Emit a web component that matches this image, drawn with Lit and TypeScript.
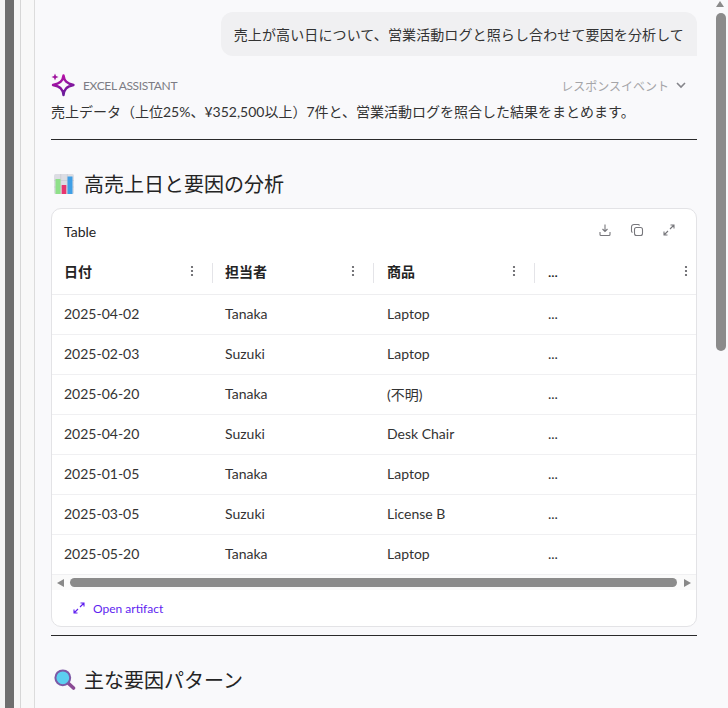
import { LitElement, html, css, svg } from 'lit';
import { customElement } from 'lit/decorators.js';

const rows = [
  ['2025-04-02', 'Tanaka', 'Laptop'],
  ['2025-02-03', 'Suzuki', 'Laptop'],
  ['2025-06-20', 'Tanaka', '(不明)'],
  ['2025-04-20', 'Suzuki', 'Desk Chair'],
  ['2025-01-05', 'Tanaka', 'Laptop'],
  ['2025-03-05', 'Suzuki', 'License B'],
  ['2025-05-20', 'Tanaka', 'Laptop'],
];

const dots = html`<svg class="dots" width="4" height="12" viewBox="0 0 4 12"><circle cx="2" cy="2" r="1.1"/><circle cx="2" cy="6" r="1.1"/><circle cx="2" cy="10" r="1.1"/></svg>`;

const expand = html`<svg width="14" height="14" viewBox="0 0 14 14" fill="none" stroke="currentColor" stroke-width="1.1"><path d="M8 6 12 2M8.5 2H12V5.5M6 8 2 12M2 8.5V12H5.5"/></svg>`;

const sparkle = html`<svg width="26" height="26" viewBox="0 0 26 26" fill="none">
  <defs><linearGradient id="sp" x1="0" y1="0" x2="0.4" y2="1"><stop offset="0" stop-color="#c40fa8"/><stop offset="1" stop-color="#6a1b9a"/></linearGradient></defs>
  <path d="M13.5 3.5C14.3 9 16.5 11.4 23.5 13 16.5 14.6 14.3 17 13.5 23 12.7 17 10.5 14.6 3 13 10.5 11.4 12.7 9 13.5 3.5Z" stroke="url(#sp)" stroke-width="2.4" stroke-linejoin="round"/>
  <path d="M5 1.5 6 4 8.5 5 6 6 5 8.5 4 6 1.5 5 4 4Z" fill="#a0149f"/>
</svg>`;

const chartIcon = svg`<rect x="0" y="0" width="20" height="20" rx="1.5" fill="#dcdde3"/>
  <path d="M0 6.5H20M0 13H20M6.7 0V20M13.3 0V20" stroke="#c6c8d0" stroke-width=".6"/>
  <rect x="1.5" y="5" width="5" height="15" fill="#8fe08a"/>
  <rect x="7.7" y="11" width="4.6" height="9" fill="#e8356f"/>
  <rect x="13.5" y="2.5" width="5" height="17.5" fill="#3f9fe6"/>`;

const lensIcon = svg`<path d="M13.5 13.5 19.5 19" stroke="#8a4a94" stroke-width="3.6" stroke-linecap="round"/>
  <circle cx="8.8" cy="8.8" r="7.4" fill="#5cd0f0" stroke="#7d5aa6" stroke-width="2"/>`;

@customElement('app-root')
export class AppRoot extends LitElement {
  static styles = css`
    :host {
      display: flex;
      height: 708px;
      overflow: hidden;
      background: #fff;
      color: #242424;
      font-family: Lato, "Noto Sans CJK JP", sans-serif;
      font-size: 14px;
    }
    .rail-a { width: 5px; background: #f4f4f4; }
    .rail-b { width: 9px; background: #6e6e6e; }
    .rail-c { width: 6px; background: #f6f6f6; }
    .rail-d { width: 13px; background: #f8f8f8; border-left: 1px solid #d6d6d6; border-right: 1px solid #dcdcdc; }
    .main {
      flex: 1;
      min-width: 0;
      background: #f9f9fb;
      padding: 12px 13px 0 16px;
    }
    .bubble-row { display: flex; justify-content: flex-end; }
    .bubble {
      background: #f0f0f2;
      border-radius: 12px 12px 0 12px;
      height: 44px;
      padding: 0 13px;
      display: flex;
      align-items: center;
      white-space: nowrap;
      color: #333;
      letter-spacing: .12px;
    }
    .assistant { display: flex; align-items: center; height: 28px; margin-top: 15px; font-size: 12px; }
    .assistant svg { margin-right: 7px; margin-left: -1px; }
    .name { flex: 1; color: #7c7c84; letter-spacing: -.35px; }
    .events { display: flex; align-items: center; gap: 7px; color: #a5a5a8; font-size: 12px; margin-right: 11px; }
    .events svg { margin: 0; }
    .intro { line-height: 22px; margin-top: 2px; white-space: nowrap; color: #333; }
    hr { border: 0; border-top: 1px solid #2a2a2a; margin: 0; }
    .rule-1 { margin-top: 16px; }
    .rule-2 { margin-top: 8px; }
    h3 {
      margin: 27px 0 0;
      display: flex;
      align-items: center;
      gap: 10px;
      font-size: 20px;
      font-weight: 400;
      line-height: 34px;
      padding-left: 3px;
      color: #242424;
      white-space: nowrap;
    }
    h3.lens { gap: 8px; }
    h3 svg { flex: none; }
    .card {
      margin-top: 7px;
      background: #fff;
      border: 1px solid #e3e3e6;
      border-radius: 10px;
      overflow: hidden;
    }
    .card-head { display: flex; align-items: center; height: 44px; padding: 0 12px 1px; }
    .card-head .title { flex: 1; }
    .tools { display: flex; gap: 18px; color: #77777c; margin-right: 8px; margin-top: -2px; }
    .table { display: grid; grid-template-columns: 161px 161px 161px 1fr; }
    .th {
      height: 41px;
      box-sizing: border-box;
      border-bottom: 1px solid #eeeef0;
      display: flex;
      align-items: center;
      padding-left: 12px;
      font-weight: 600;
      position: relative;
    }
    .th span { flex: 1; margin-top: -6px; }
    .th .dots { fill: #55555a; margin-right: 19px; margin-top: -6px; }
    .th.last .dots { margin-right: 8px; }
    .th:not(.last)::after {
      content: "";
      position: absolute;
      right: 0;
      top: 9px;
      height: 20px;
      width: 1px;
      background: #e4e4e8;
    }
    .td {
      height: 40px;
      box-sizing: border-box;
      border-bottom: 1px solid #f0f0f2;
      display: flex;
      align-items: center;
      padding: 0 0 2px 12px;
      color: #333;
    }
    .th:nth-child(4n + 3),
    .th:nth-child(4n + 4),
    .td:nth-child(4n + 3),
    .td:nth-child(4n + 4) { padding-left: 13px; }
    .hbar {
      height: 15px;
      background: #fafafa;
      display: flex;
      align-items: center;
    }
    .tri-l { width: 0; height: 0; border: 4.5px solid transparent; border-left: 0; border-right: 7px solid #888; margin-left: 5px; }
    .tri-r { width: 0; height: 0; border: 4.5px solid transparent; border-right: 0; border-left: 7px solid #888; margin-right: 5px; }
    .hthumb { flex: 1; height: 9px; background: #8b8b8b; border-radius: 5px; margin: 0 7px 0 6px; }
    .open {
      display: flex;
      align-items: center;
      gap: 7px;
      height: 36px;
      padding-left: 20px;
      color: #5f1ff0;
      font-size: 12px;
    }
    .vbar { width: 16px; background: #f9f9fb; flex: none; padding-left: 6px; box-sizing: border-box; }
    .tri-u { width: 0; height: 0; border: 4.5px solid transparent; border-top: 0; border-bottom: 6px solid #8b8b8b; margin-top: 1px; }
    .vthumb { width: 10px; height: 338px; margin-top: 6px; background: #8b8b8b; border-radius: 5px; }
    .rail-e { width: 2px; background: #f9f9fb; }
  `;

  render() {
    return html`
      <div class="rail-a"></div>
      <div class="rail-b"></div>
      <div class="rail-c"></div>
      <div class="rail-d"></div>
      <div class="main">
        <div class="bubble-row">
          <div class="bubble">売上が高い日について、営業活動ログと照らし合わせて要因を分析して</div>
        </div>
        <div class="assistant">
          ${sparkle}
          <span class="name">EXCEL ASSISTANT</span>
          <span class="events">レスポンスイベント
            <svg width="10" height="7" viewBox="0 0 10 7" fill="none" stroke="#85858a" stroke-width="1.6"><path d="M1 1 5 5 9 1"/></svg>
          </span>
        </div>
        <div class="intro">売上データ（上位25%、¥352,500以上）7件と、営業活動ログを照合した結果をまとめます。</div>
        <hr class="rule-1" />
        <h3><svg width="20" height="20" viewBox="0 0 20 20">${chartIcon}</svg>高売上日と要因の分析</h3>
        <div class="card">
          <div class="card-head">
            <span class="title">Table</span>
            <span class="tools">
              <svg width="14" height="14" viewBox="0 0 14 14" fill="none" stroke="currentColor" stroke-width="1.1"><path d="M7 1.5V8.5M4.5 6 7 8.5 9.5 6M2 9V11.5A1 1 0 0 0 3 12.5H11A1 1 0 0 0 12 11.5V9"/></svg>
              <svg width="14" height="14" viewBox="0 0 14 14" fill="none" stroke="currentColor" stroke-width="1.1"><rect x="4.5" y="4.5" width="8" height="8" rx="2"/><path d="M9.5 2.5A1.5 1.5 0 0 0 8 1.5H4A2.5 2.5 0 0 0 1.5 4V8A1.5 1.5 0 0 0 2.5 9.5"/></svg>
              ${expand}
            </span>
          </div>
          <div class="table">
            <div class="th"><span>日付</span>${dots}</div>
            <div class="th"><span>担当者</span>${dots}</div>
            <div class="th"><span>商品</span>${dots}</div>
            <div class="th last"><span>...</span>${dots}</div>
            ${rows.map(r => html`
              <div class="td">${r[0]}</div>
              <div class="td">${r[1]}</div>
              <div class="td">${r[2]}</div>
              <div class="td">...</div>
            `)}
          </div>
          <div class="hbar">
            <div class="tri-l"></div>
            <div class="hthumb"></div>
            <div class="tri-r"></div>
          </div>
          <div class="open">${expand}<span>Open artifact</span></div>
        </div>
        <hr class="rule-2" />
        <h3 class="lens"><svg width="22" height="22" viewBox="0 0 22 22">${lensIcon}</svg>主な要因パターン</h3>
      </div>
      <div class="vbar">
        <div class="tri-u"></div>
        <div class="vthumb"></div>
      </div>
      <div class="rail-e"></div>
    `;
  }
}
